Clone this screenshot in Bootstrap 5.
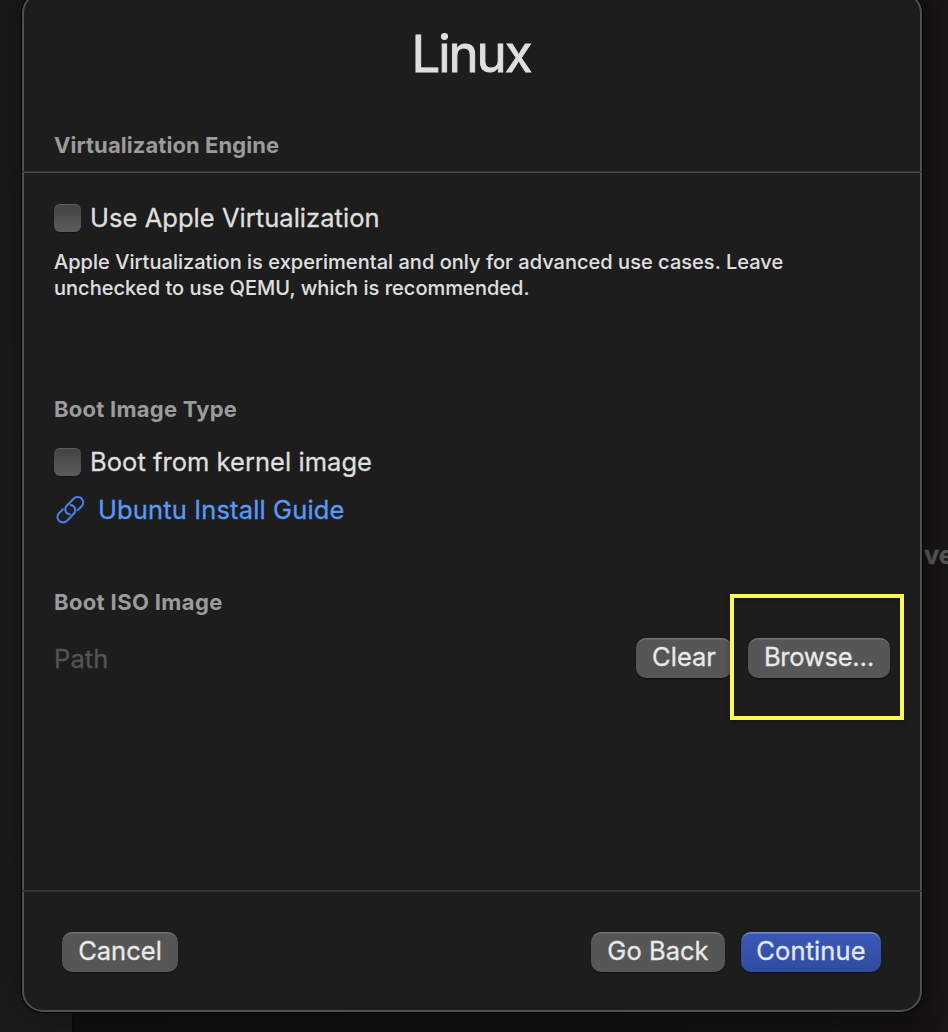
<!DOCTYPE html>
<html lang="en">
<head>
<meta charset="utf-8">
<meta name="viewport" content="width=device-width, initial-scale=1">
<title>Linux</title>
<link href="https://cdn.jsdelivr.net/npm/bootstrap@5.3.0/dist/css/bootstrap.min.css" rel="stylesheet">
<style>
  html, body { height: 100%; }
  body { background: #111; color: #dfdfdf; font-family: Inter, sans-serif; font-size: 25.5px; line-height: 32px; -webkit-text-stroke: .3px; }
  .stage { height: 1032px; }

  /* window behind the sheet */
  .backdrop-sidebar { width: 74px; background: linear-gradient(#191919, #1b1b1b); border-right: 2px solid #0b0b0b; }
  .backdrop-main { background: linear-gradient(90deg, #100f0f 0%, #131112 96%, #181617 100%); }
  .backdrop-text { right: -6px; top: 539px; color: #575757; font-weight: 700; }

  /* sheet */
  .sheet { width: 900px; height: 1020px; margin: -8px 0 0 22px; background: #1d1d1d;
           border: 2px solid #505050; border-radius: 21px;
           box-shadow: 0 0 0 1px #000, 0 0 26px 4px rgba(0, 0, 0, .3); }
  .sheet-title { font-size: 51px; font-weight: 400; line-height: 60px; letter-spacing: -2.05px; padding: 30px 2px 0 0; margin: 0 0 47px; -webkit-text-stroke: .9px; }
  .sheet-body { padding: 0 30px; }
  .rule-top { height: 2px; margin: 12px -2px 0; background: linear-gradient(#2f2f2f 50%, #484848 50%); }
  .rule-bottom { height: 2px; margin: 0 -2px; background: #353535; }
  .section-title { font-size: 22px; font-weight: 700; line-height: 28px; color: #9b9b9b; margin: 0; letter-spacing: .07px; -webkit-text-stroke: 0; }
  .boot-title { letter-spacing: .24px; }
  .iso-title { letter-spacing: .36px; }
  .tick { width: 27px; height: 28px; margin: 0 9px 0 0; border-radius: 6px; flex: none; border: 0;
          background: linear-gradient(#424242, #5c5c5c);
          box-shadow: inset 0 1px 0 rgba(255, 255, 255, .15), 0 1px 1px rgba(0, 0, 0, .35); }
  .option { letter-spacing: .04px; }
  .note { font-size: 20px; font-weight: 500; line-height: 26px; letter-spacing: .03px; -webkit-text-stroke: .1px; }
  .guide { color: #589af8; letter-spacing: .14px; }
  .guide:hover { color: #589af8; }
  .path-hint { color: #545454; letter-spacing: .1px; padding-top: 2px; }

  .btn-mac { --bs-btn-font-size: 25.5px; --bs-btn-line-height: 38px; --bs-btn-padding-x: 0; --bs-btn-padding-y: 0;
             --bs-btn-color: #e9e9e9; --bs-btn-bg: #565656; --bs-btn-hover-bg: #606060; --bs-btn-hover-color: #fff;
             --bs-btn-border-width: 0; --bs-btn-border-radius: 10px;
             height: 40px; padding-bottom: 2px;
             box-shadow: inset 0 2px 0 -.5px rgba(255, 255, 255, .17), 0 1px 2px rgba(0, 0, 0, .5); }
  .btn-go { --bs-btn-color: #e3e8f8; background: linear-gradient(#3a58b8, #304c9f);
            box-shadow: inset 0 2px 0 -.5px rgba(255, 255, 255, .3), 0 1px 2px rgba(0, 0, 0, .5); letter-spacing: .1px; }
  .w-clear { width: 96px; }
  .w-browse { width: 142px; letter-spacing: -.25px; }
  .w-cancel { width: 116px; letter-spacing: .02px; }
  .w-back { width: 134px; letter-spacing: .03px; }
  .w-continue { width: 140px; }

  /* highlight drawn over the Browse button */
  .callout-box { left: -18px; top: -44px; width: 174px; height: 126px; border: 4px solid #fdf852;
                 box-shadow: 0 2px 5px rgba(0, 0, 0, .35), inset 0 2px 4px rgba(0, 0, 0, .25); pointer-events: none; }
</style>
</head>
<body>
<div class="stage position-relative overflow-hidden">
  <div class="position-absolute top-0 start-0 w-100 h-100 d-flex" aria-hidden="true">
    <div class="backdrop-sidebar"></div>
    <div class="backdrop-main flex-grow-1"></div>
    <span class="backdrop-text position-absolute">ve</span>
  </div>

  <main class="sheet position-relative d-flex flex-column">
    <h1 class="sheet-title text-center">Linux</h1>
    <div class="sheet-body">
      <h2 class="section-title">Virtualization Engine</h2>
    </div>
    <div class="rule-top"></div>

    <div class="sheet-body flex-grow-1">
      <label class="option d-flex align-items-center" style="margin-top:29px">
        <span class="tick"></span><span>Use Apple Virtualization</span>
      </label>
      <p class="note mb-0" style="margin-top:15px">Apple Virtualization is experimental and only for advanced use cases. Leave<br>unchecked to use QEMU, which is recommended.</p>

      <h2 class="section-title boot-title" style="margin-top:94px">Boot Image Type</h2>
      <label class="option d-flex align-items-center" style="margin-top:23px">
        <span class="tick"></span><span>Boot from kernel image</span>
      </label>
      <a href="#" class="guide d-flex align-items-center text-decoration-none" style="margin-top:16px">
        <svg width="32" height="32" viewBox="0 0 32 32" fill="none" stroke="#4a7fe6" stroke-width="2.1" stroke-linecap="round" style="margin-right:12px">
          <path d="M8.9 15.3 5.2 19C2.9 21.3 2.9 24.6 5 26.8C7.2 29 10.8 28.9 13 26.7L19.6 20C21.8 17.8 21.9 14.4 19.8 12.4C19 11.6 18 11.2 16.8 11.1"/>
          <path d="M23.7 16.1 27.4 12.4C29.7 10.1 29.7 6.8 27.6 4.6C25.4 2.4 21.8 2.5 19.6 4.7L13 11.4C10.8 13.6 10.7 17 12.8 19C13.6 19.8 14.6 20.2 15.8 20.3"/>
        </svg>
        <span>Ubuntu Install Guide</span>
      </a>

      <h2 class="section-title iso-title" style="margin-top:62px">Boot ISO Image</h2>
      <div class="d-flex align-items-center" style="margin-top:22px">
        <span class="path-hint me-auto">Path</span>
        <button type="button" class="btn btn-mac w-clear">Clear</button>
        <div class="position-relative d-flex ms-3">
          <button type="button" class="btn btn-mac w-browse">Browse…</button>
          <div class="callout-box position-absolute"></div>
        </div>
      </div>
    </div>

    <div class="rule-bottom"></div>
    <footer class="d-flex" style="padding:40px 39px 38px 38px">
      <button type="button" class="btn btn-mac w-cancel me-auto">Cancel</button>
      <button type="button" class="btn btn-mac w-back me-3">Go Back</button>
      <button type="button" class="btn btn-mac btn-go w-continue">Continue</button>
    </footer>
  </main>
</div>
<script src="https://cdn.jsdelivr.net/npm/bootstrap@5.3.0/dist/js/bootstrap.bundle.min.js"></script>
</body>
</html>
